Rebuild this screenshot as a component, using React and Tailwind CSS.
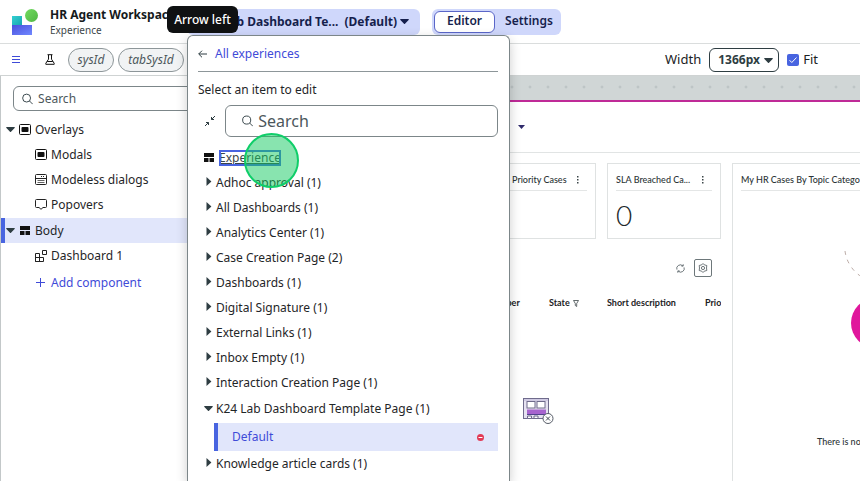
import React from "react";

const uiFont = "font-['Noto_Sans','Liberation_Sans',sans-serif]";
const dashFont = "font-['Lato','Liberation_Sans',sans-serif]";

function Caret({ className = "" }) {
  return (
    <svg className={className} width="9" height="5" viewBox="0 0 9 5" fill="currentColor" aria-hidden="true">
      <path d="M0.8 0h7.4c.6 0 .8.5.4.9L5 4.7c-.3.3-.7.3-1 0L.4.9C0 .5.2 0 .8 0z" />
    </svg>
  );
}

function CaretRight() {
  return (
    <svg width="6" height="11" viewBox="0 0 6 11" fill="#2e3d42" aria-hidden="true">
      <path d="M0.5 0 5.4 4.5 0.5 9z" />
    </svg>
  );
}

function SearchIcon({ className = "" }) {
  return (
    <svg className={className} width="12" height="12" viewBox="0 0 12 12" fill="none" stroke="#2e3d42" aria-hidden="true">
      <circle cx="5" cy="5" r="4.3" />
      <path d="M8.2 8.2 11.6 11.6" />
    </svg>
  );
}

function Logo() {
  return (
    <svg width="26" height="26" viewBox="0 0 26 26" aria-hidden="true">
      <defs>
        <linearGradient id="teal" x1="0" y1="0" x2="1" y2="1">
          <stop offset="0" stopColor="#35d0d2" />
          <stop offset="1" stopColor="#15a5ae" />
        </linearGradient>
        <linearGradient id="indigo" x1="0" y1="0" x2="1" y2="1">
          <stop offset="0" stopColor="#4a50dc" />
          <stop offset="1" stopColor="#7088ff" />
        </linearGradient>
        <linearGradient id="leaf" x1="0" y1="0" x2="1" y2="1">
          <stop offset="0" stopColor="#72dc60" />
          <stop offset="1" stopColor="#4fb543" />
        </linearGradient>
      </defs>
      <rect x="0" y="7" width="10" height="10" fill="url(#teal)" />
      <rect x="0" y="16" width="20" height="10" fill="url(#indigo)" />
      <circle cx="19.5" cy="6.5" r="6.5" fill="url(#leaf)" />
    </svg>
  );
}

function OverlayIcon() {
  return (
    <svg width="12" height="12" viewBox="0 0 12 12" aria-hidden="true">
      <rect x="0.5" y="0.5" width="11" height="10" rx="1" fill="none" stroke="#111" />
      <rect x="2.5" y="3" width="7" height="5" rx="1" fill="#111" />
    </svg>
  );
}

function ModelessIcon() {
  return (
    <svg width="12" height="12" viewBox="0 0 12 12" fill="none" stroke="#222" aria-hidden="true">
      <rect x="0.5" y="0.5" width="11" height="10" rx="1" />
      <path d="M0.5 4.5h11M6 2.5h1M8 2.5h1" />
      <path d="M2.5 6.5h7M2.5 8.5h7" strokeWidth="0.7" />
    </svg>
  );
}

function PopoverIcon() {
  return (
    <svg width="12" height="12" viewBox="0 0 12 12" fill="none" stroke="#222" aria-hidden="true">
      <path d="M1.5 0.5h9a1 1 0 0 1 1 1v6a1 1 0 0 1-1 1H8L6 10.3 4 8.5H1.5a1 1 0 0 1-1-1v-6a1 1 0 0 1 1-1z" />
    </svg>
  );
}

function BodyIcon() {
  return (
    <svg width="10" height="10" viewBox="0 0 10 10" fill="#111" aria-hidden="true">
      <path d="M0 0h10v4H0zM0 5h4.5v4H0zM5.5 5H10v4H5.5z" />
    </svg>
  );
}

function DashboardIcon() {
  return (
    <svg width="12" height="12" viewBox="0 0 12 12" fill="none" stroke="#222" aria-hidden="true">
      <path d="M0.5 3.5h4v8h-4zM0.5 7.5h8v4h-8zM7.5 0.5h4v4h-4z" />
    </svg>
  );
}

function PlusIcon() {
  return (
    <svg width="12" height="12" viewBox="0 0 12 12" stroke="#3f4bd8" aria-hidden="true">
      <path d="M1 5.5h9M5.5 1v9" />
    </svg>
  );
}

function Header() {
  return (
    <header className="flex h-11 shrink-0 items-center border-b border-[#dadddd] pl-3">
      <Logo />
      <div className="ml-3 w-[137px] shrink-0 whitespace-nowrap">
        <h1 className="text-[12px] leading-4 font-bold text-[#151a1c]">HR Agent Workspace</h1>
        <p className="text-[10px] leading-[14px] text-[#3c4649]">Experience</p>
      </div>
      <button className="flex h-[26px] w-[233px] shrink-0 items-center justify-end rounded-md bg-[#cfd7fb] pr-[11px] text-[12px] font-bold whitespace-nowrap text-[#161f4d]">
        <span>K24 Lab Dashboard Te...</span>
        <span className="ml-1.5">(Default)</span>
        <Caret className="ml-[3px]" />
      </button>
      <div className="ml-3 flex h-[26px] shrink-0 items-center rounded-md bg-[#cfd7fb] pl-0.5 text-[12px] font-semibold text-[#161f4d]">
        <button className="h-[22px] w-[61px] rounded-md border border-[#5a66c8] bg-white pb-0.5 leading-4">Editor</button>
        <button className="h-[22px] w-[66px] pb-0.5 pl-0.5 leading-4">Settings</button>
      </div>
    </header>
  );
}

function Toolbar() {
  return (
    <div className="flex h-8 shrink-0 items-center border-b border-[#cfd3d3] pl-3">
      <button aria-label="Menu">
        <svg width="8" height="8" viewBox="0 0 8 8" stroke="#3f4bd8" aria-hidden="true">
          <path d="M0 0.5h8M0 3.5h8M0 6.5h8" />
        </svg>
      </button>
      <button aria-label="Test values" className="ml-[25px]">
        <svg width="10" height="11" viewBox="0 0 10 11" fill="none" stroke="#111" aria-hidden="true">
          <path d="M2.5 0.7h5M3.5 1v4.2L0.8 9.3v1h8.4v-1L6.5 5.2V1M2.2 7.5h5.6" />
        </svg>
      </button>
      <div className="ml-[13px] flex shrink-0 gap-1 text-[12px] text-[#4c575b] italic">
        <span className="flex h-6 w-[46px] items-center justify-center rounded-full border border-[#8d9699] bg-[#f1f3f4]">sysId</span>
        <span className="flex h-6 w-[66px] items-center justify-center rounded-full border border-[#8d9699] bg-[#f1f3f4]">tabSysId</span>
      </div>
      <div className="ml-auto flex items-center pr-[42px] text-[13px] text-[#1c2224]">
        <label htmlFor="width">Width</label>
        <div className="relative ml-2">
          <select id="width" defaultValue="1366" className="h-6 w-[70px] appearance-none rounded-md border border-[#2e3d42] bg-white pl-2 text-[12px] leading-4 font-bold text-[#2e3d42]">
            <option value="1366">1366px</option>
          </select>
          <Caret className="pointer-events-none absolute top-2.5 right-1.5 text-[#2e3d42]" />
        </div>
        <label className="relative ml-2 flex items-center gap-1">
          <input type="checkbox" defaultChecked className="size-3 appearance-none rounded-xs bg-[#4864e0]" />
          <svg className="pointer-events-none absolute left-0" width="12" height="12" viewBox="0 0 12 12" fill="none" stroke="#fff" aria-hidden="true">
            <path d="M2.5 6.2 4.8 8.5 9.5 3.5" />
          </svg>
          Fit
        </label>
      </div>
    </div>
  );
}

const treeRow = "flex h-[25px] w-full items-center text-left whitespace-nowrap";

function Sidebar() {
  return (
    <aside className="w-60 shrink-0 border-l border-[#c3c8c9] text-[12px] text-[#1f2628]">
      <div className="mx-3 mt-2.5 mb-1.5 flex h-[25px] items-center rounded-md border border-[#7c8689] pl-2">
        <SearchIcon />
        <input aria-label="Search components" placeholder="Search" className="ml-[5px] w-full bg-transparent outline-none placeholder:text-[#4c575b]" />
      </div>
      <button className={`${treeRow} gap-1 pl-[5px]`}>
        <Caret className="text-[#2e3d42]" />
        <OverlayIcon />
        Overlays
      </button>
      <button className={`${treeRow} gap-1 pl-[34px]`}><OverlayIcon />Modals</button>
      <button className={`${treeRow} gap-1 pl-[34px]`}><ModelessIcon />Modeless dialogs</button>
      <button className={`${treeRow} gap-1 pl-[34px]`}><PopoverIcon />Popovers</button>
      <button className={`${treeRow} mt-px gap-[5px] border-l-4 border-[#4864e0] bg-[#e1e6fb] pl-px`}>
        <Caret className="text-[#2e3d42]" />
        <BodyIcon />
        Body
      </button>
      <button className={`${treeRow} gap-1 pl-[34px]`}><DashboardIcon />Dashboard 1</button>
      <button className={`${treeRow} mt-0.5 gap-1 pl-[34px] text-[#3f4bd8]`}><PlusIcon />Add component</button>
    </aside>
  );
}

function KebabIcon() {
  return (
    <svg width="2" height="8" viewBox="0 0 2 8" fill="#3c4649" aria-hidden="true">
      <path d="M0 0h1.5v1.5H0zM0 3h1.5v1.5H0zM0 6h1.5v1.5H0z" />
    </svg>
  );
}

function ScoreCard({ title, value }) {
  return (
    <section className="h-[76px] w-[114px] border border-[#dfe2e2] px-2">
      <div className="flex h-[27px] items-center justify-between border-b border-[#e4e6e6] pt-1.5 whitespace-nowrap">
        <h2>{title}</h2>
        <button aria-label={`${title} options`} className="mr-2"><KebabIcon /></button>
      </div>
      <p className="mt-2 text-[28px] leading-8 font-light text-[#20282a]">{value}</p>
    </section>
  );
}

function EmptyIllustration() {
  return (
    <svg width="31" height="26" viewBox="0 0 31 26" fill="none" aria-hidden="true">
      <rect x="0.5" y="0.5" width="25" height="20" fill="#e6e2f1" stroke="#6f6b8c" />
      <path d="M1 2h24" stroke="#b9b2d4" />
      <rect x="4" y="3.5" width="8" height="6.5" fill="#fff" stroke="#6f6b8c" />
      <rect x="14" y="3.5" width="8" height="6.5" fill="#fff" stroke="#6f6b8c" />
      <rect x="4" y="11.5" width="19" height="4.5" fill="#a763cf" />
      <path d="M4 16.5h19" stroke="#51438c" />
      <path d="M4.5 18h4v2.5h-4zM11 18h4v2.5h-4z" fill="#fff" stroke="#6f6b8c" />
      <circle cx="25" cy="20.5" r="5" fill="#fff" stroke="#555b66" />
      <path d="M23 18.5l4 4M27 18.5l-4 4" stroke="#444a55" />
    </svg>
  );
}

function Canvas() {
  return (
    <main className={`${dashFont} flex min-w-0 flex-1 flex-col text-[9px] font-medium text-[#2b3436]`}>
      <div className="h-6 shrink-0 bg-[#d0d6d6] bg-[radial-gradient(circle_at_2px_11px,#b4bbbc_0px,transparent_2px)] bg-[length:18px_24px]" />
      <div className="flex h-[53px] shrink-0 items-center border-t-2 border-b border-t-[#bf2a97] border-b-[#e1e4e4] pl-[268px]">
        <span className="h-3.5 w-0.5 bg-[#848b99]" />
        <button aria-label="Dashboard options" className="ml-2">
          <svg width="7" height="4" viewBox="0 0 7 4" fill="#2f2a6b" aria-hidden="true"><path d="M0 0h7L3.5 4z" /></svg>
        </button>
      </div>
      <div className="flex min-h-0 flex-1 gap-[11px] pt-2.5">
        <div className="flex w-[481px] shrink-0 flex-col overflow-hidden">
          <div className="flex justify-end gap-[11px]">
            <ScoreCard title="High Priority Cases" value="" />
            <ScoreCard title="SLA Breached Ca..." value="0" />
          </div>
          <div className="mt-5 flex items-center justify-end gap-[9px] pr-[9px]">
            <button aria-label="Refresh">
              <svg width="9" height="9" viewBox="0 0 10 10" fill="none" stroke="#4c575b" strokeWidth="0.9" aria-hidden="true">
                <path d="M1 6.2a4 4 0 0 1 6.5-4.2M9 3.8a4 4 0 0 1-6.5 4.2M8 0.3v2H6M2 9.7v-2h2" />
              </svg>
            </button>
            <button aria-label="List settings" className="flex size-[18px] items-center justify-center rounded-xs border border-[#6d777a]">
              <svg width="10" height="10" viewBox="0 0 10 10" fill="none" stroke="#4c575b" strokeWidth="0.8" aria-hidden="true">
                <path d="M5 0.5 6.2 1.8 8.8 2.5 8.5 5 8.8 7.5 6.2 8.2 5 9.5 3.8 8.2 1.2 7.5 1.5 5 1.2 2.5 3.8 1.8z" />
                <circle cx="5" cy="5" r="1.6" />
              </svg>
            </button>
          </div>
          <table className="mt-[17px] w-full table-fixed text-left whitespace-nowrap">
            <thead>
              <tr className="h-[18px] font-bold text-[#1c2224]">
                <th className="pl-[247px]">Number</th>
                <th className="w-[58px]">
                  <span className="flex items-center gap-[3px]">
                    State
                    <svg width="6" height="7" viewBox="0 0 6 7" fill="none" stroke="#3c4649" strokeWidth="0.8" aria-hidden="true">
                      <path d="M0.5 0.5h5L3.7 3.5v3L2.3 5.5v-2z" />
                    </svg>
                  </span>
                </th>
                <th className="w-[98px]">Short description</th>
                <th className="w-4">Prio</th>
              </tr>
            </thead>
          </table>
          <div className="mt-[86px] ml-[283px]"><EmptyIllustration /></div>
        </div>
        <section className="min-w-0 flex-1 overflow-hidden border-t border-l border-[#dfe2e2] pl-2 whitespace-nowrap">
          <h2 className="flex h-[27px] items-center border-b border-[#e4e6e6] pt-1.5">My HR Cases By Topic Catego</h2>
          <div className="flex h-[243px] pl-[102px]">
            <svg className="shrink-0" width="100" height="243" viewBox="843 191 100 243" fill="none" aria-hidden="true">
              <path d="M845 251a36 36 0 0 0 26 30" stroke="#a9968f" strokeDasharray="4 5" strokeWidth="0.8" />
              <circle cx="876" cy="323" r="25" fill="#e0179c" />
            </svg>
          </div>
          <p className="pl-[76px] leading-4">There is no</p>
        </section>
      </div>
    </main>
  );
}

const pages = [
  "Adhoc approval (1)",
  "All Dashboards (1)",
  "Analytics Center (1)",
  "Case Creation Page (2)",
  "Dashboards (1)",
  "Digital Signature (1)",
  "External Links (1)",
  "Inbox Empty (1)",
  "Interaction Creation Page (1)",
];

function ExperienceMenu() {
  return (
    <div className="absolute top-[35px] bottom-0 left-[187px] w-[323px] overflow-hidden rounded-t-md border border-b-0 border-[#7c8689] bg-white pr-[11px] pl-2.5 text-[12px] whitespace-nowrap text-[#1f2628] shadow-[0_4px_12px_rgba(0,0,0,0.2)]">
      <div className="flex h-9 items-center border-b border-[#8d9699]">
        <a href="#experiences" className="flex items-center gap-2 text-[#3f4bd8]">
          <svg width="9" height="8" viewBox="0 0 9 8" fill="none" stroke="#2e3d42" aria-hidden="true">
            <path d="M9 4H0.8M4 0.7 0.7 4 4 7.3" />
          </svg>
          All experiences
        </a>
      </div>
      <p className="mt-2.5 leading-4">Select an item to edit</p>
      <div className="mt-[7px] flex items-center">
        <button aria-label="Collapse all" className="ml-[7px]">
          <svg width="10" height="10" viewBox="0 0 10 10" fill="none" stroke="#2e3d42" aria-hidden="true">
            <path d="M10 0 6.5 3.5M6.5 1v2.5H9M0 10 3.5 6.5M1 6.5h2.5V9" />
          </svg>
        </button>
        <div className="ml-2.5 flex h-8 flex-1 items-center rounded-md border border-[#7c8689] pl-4">
          <SearchIcon />
          <input aria-label="Search pages" placeholder="Search" className="ml-[5px] w-full bg-transparent text-[16px] outline-none placeholder:text-[#4c575b]" />
        </div>
      </div>
      <div className="mt-3 flex h-[18px] items-center gap-[5px] pl-1.5">
        <BodyIcon />
        <a href="#experience" className="leading-4 text-[#3c4649] underline outline-2 -outline-offset-2 outline-[#4864e0]">Experience</a>
      </div>
      <ul className="mt-[3px]">
        {pages.map((page) => (
          <li key={page}>
            <button className={`${treeRow} gap-1 pl-2`}>
              <CaretRight />
              {page}
            </button>
          </li>
        ))}
        <li className="mt-px">
          <button className={`${treeRow} gap-[3px] pl-1.5`}>
            <Caret className="text-[#2e3d42]" />
            K24 Lab Dashboard Template Page (1)
          </button>
          <button className="mt-0.5 ml-4 flex h-7 w-[284px] items-center justify-between border-l-4 border-[#4864e0] bg-[#e1e6fb] pr-3.5 pl-3.5 text-[#3f4bd8]">
            Default
            <svg width="7" height="7" viewBox="0 0 7 7" aria-hidden="true">
              <circle cx="3.5" cy="3.5" r="3.5" fill="#e23a55" />
              <path d="M1.5 3.5h4" stroke="#fff" />
            </svg>
          </button>
        </li>
        <li>
          <button className={`${treeRow} gap-1 pl-2`}>
            <CaretRight />
            Knowledge article cards (1)
          </button>
        </li>
      </ul>
    </div>
  );
}

export default function App() {
  return (
    <div className={`${uiFont} relative flex h-screen flex-col overflow-hidden bg-white`}>
      <Header />
      <Toolbar />
      <div className="flex min-h-0 flex-1">
        <Sidebar />
        <Canvas />
      </div>
      <ExperienceMenu />
      <div role="tooltip" className="absolute top-1.5 left-[167px] flex h-[27px] w-[71px] items-center justify-center rounded-md bg-[#0f1112] text-[12px] font-medium whitespace-nowrap text-white">
        Arrow left
      </div>
      <div className="pointer-events-none absolute top-[133px] left-[244px] size-[55px] rounded-full border-2 border-[#0fce69] bg-[#12c95f]/50" />
    </div>
  );
}
